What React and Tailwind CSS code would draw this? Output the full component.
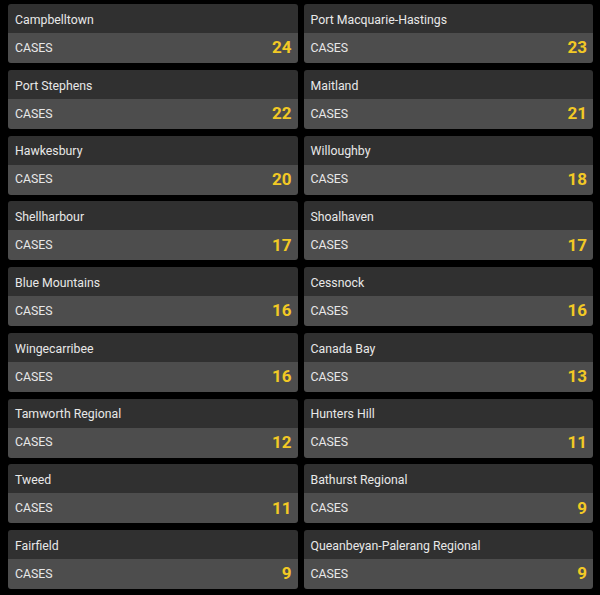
const rows = [
  ["Campbelltown", 24, "Port Macquarie-Hastings", 23],
  ["Port Stephens", 22, "Maitland", 21],
  ["Hawkesbury", 20, "Willoughby", 18],
  ["Shellharbour", 17, "Shoalhaven", 17],
  ["Blue Mountains", 16, "Cessnock", 16],
  ["Wingecarribee", 16, "Canada Bay", 13],
  ["Tamworth Regional", 12, "Hunters Hill", 11],
  ["Tweed", 11, "Bathurst Regional", 9],
  ["Fairfield", 9, "Queanbeyan-Palerang Regional", 9],
];

const Card = ({ name, cases }) => (
  <div className="rounded-[3px] overflow-hidden">
    <div className="h-[29px] bg-[#303030] px-[7px] pt-[3px] flex items-center text-[12.3px] text-[#e8e8e8]">
      {name}
    </div>
    <div className="h-[30px] bg-[#4d4d4d] pl-[7px] pr-[6px] flex items-center justify-between">
      <span className="text-[12.3px] text-[#e8e8e8]">CASES</span>
      <span className="text-[17px] font-bold text-[#f2c925]">{cases}</span>
    </div>
  </div>
);

export default function App() {
  return (
    <div className="w-[600px] h-[595px] bg-black pt-1 pl-2 pr-[7px] font-['Roboto',_'Liberation_Sans',_sans-serif]">
      <div className="grid grid-cols-2 gap-x-[6px] gap-y-[6.75px]">
        {rows.map(([a, ac, b, bc]) => (
          <>
            <Card key={a} name={a} cases={ac} />
            <Card key={b} name={b} cases={bc} />
          </>
        ))}
      </div>
    </div>
  );
}
